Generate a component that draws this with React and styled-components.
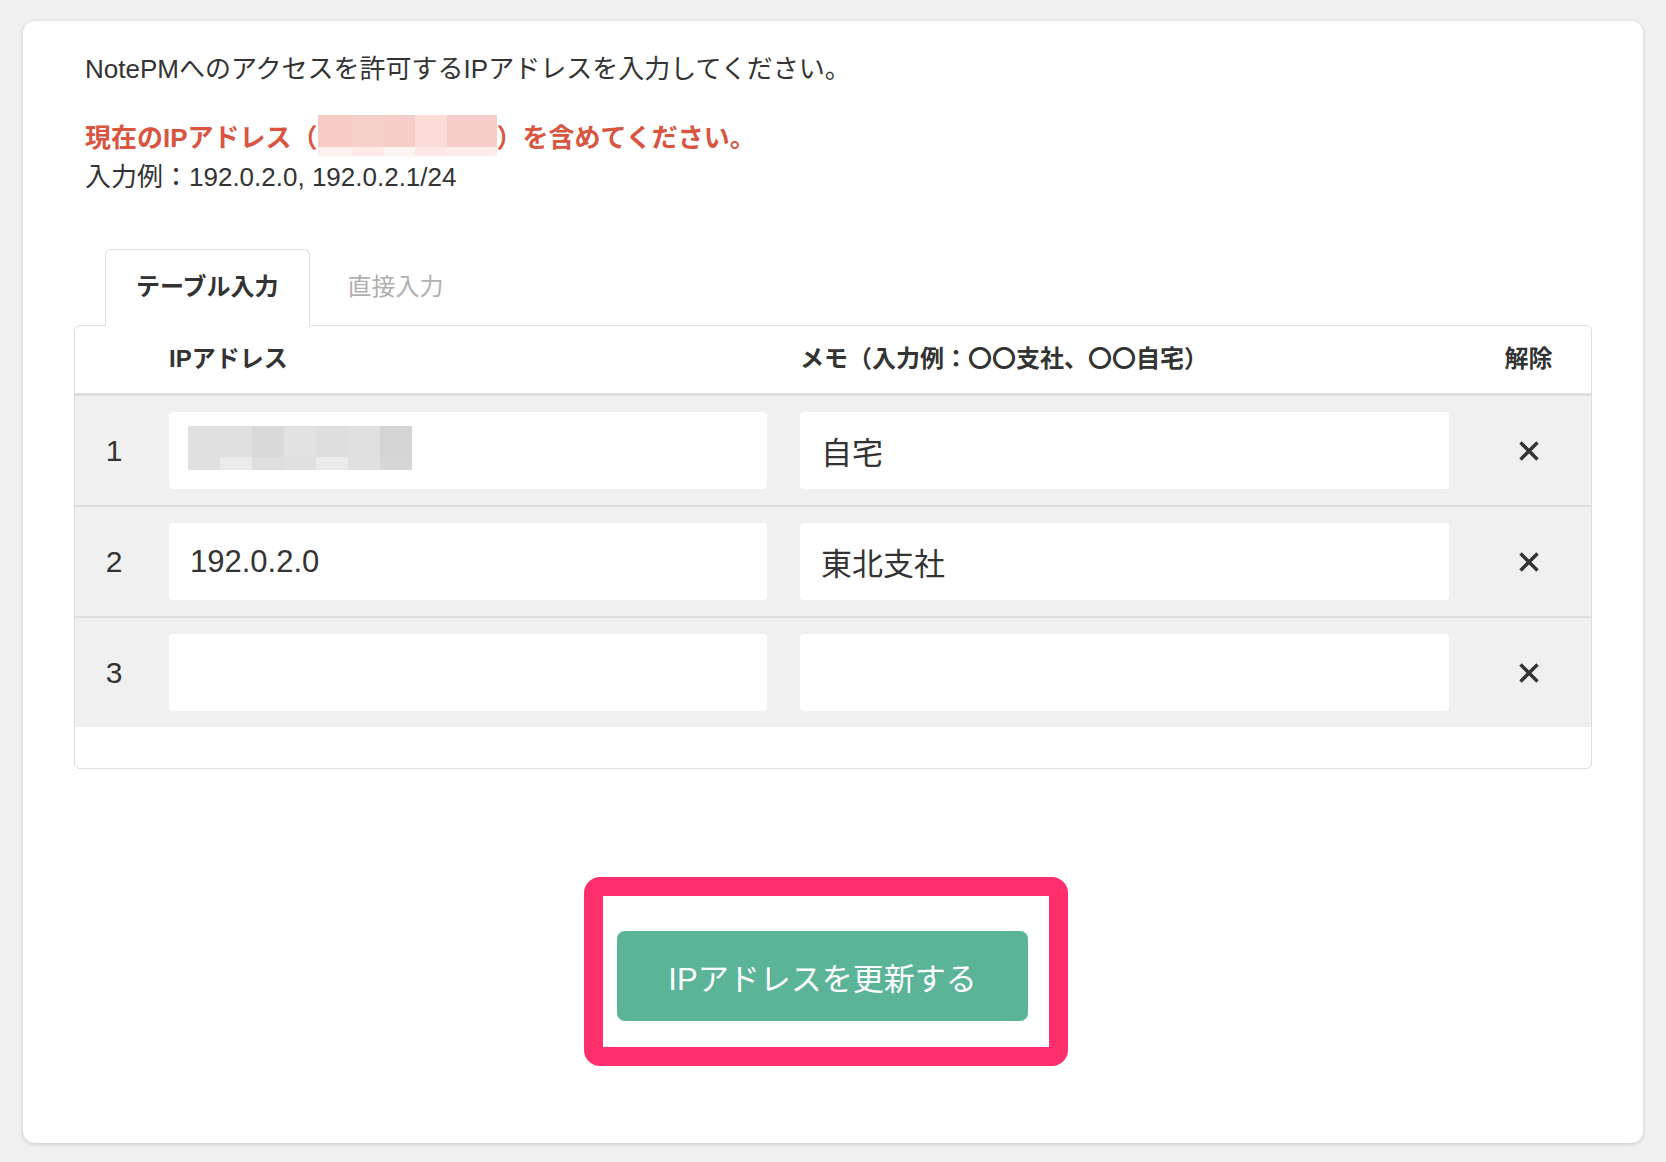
import React from 'react'
import styled, { createGlobalStyle } from 'styled-components'

const GlobalStyle = createGlobalStyle`
  html, body {
    margin: 0;
    background: #f0f0f0;
  }
  body {
    font-family: "Liberation Sans", "Noto Sans CJK JP", sans-serif;
    color: #333;
  }
  * { box-sizing: border-box; }
`

const Page = styled.div`
  padding: 21px 23px 19px;
`

const Card = styled.div`
  background: #fff;
  border-radius: 12px;
  box-shadow: 0 1px 4px rgba(0, 0, 0, 0.16);
  padding: 30px 51px 77px;
`

const Lead = styled.p`
  margin: 0 0 0 11px;
  font-size: 26px;
  line-height: 36px;
`

const Warning = styled(Lead)`
  margin-top: 33px;
  color: #d9553f;
  font-weight: bold;
`

const Example = styled(Lead)`
  margin-top: 3px;
`

/* pixelated blur used to hide addresses */
const Mosaic = styled.span`
  display: inline-flex;
  vertical-align: top;
  height: ${p => p.$h}px;
  margin: ${p => p.$margin || 0};
`

const MosaicCol = styled.span`
  display: flex;
  flex-direction: column;
  width: ${p => p.$w}px;
`

const MosaicCell = styled.span`
  display: block;
  background: ${p => p.$c};
  flex: ${p => p.$grow};
`

const TabBar = styled.div`
  display: flex;
  margin-top: 54px;
  padding-left: 31px;
`

const Tab = styled.div`
  height: 77px;
  display: flex;
  align-items: center;
  padding: 0 ${p => (p.$active ? 30 : 37)}px 8px;
  font-size: 24px;
  font-weight: ${p => (p.$active ? 'bold' : 'normal')};
  color: ${p => (p.$active ? '#333' : '#b0b0b0')};
  background: ${p => (p.$active ? '#fff' : 'transparent')};
  border: 1px solid ${p => (p.$active ? '#ddd' : 'transparent')};
  border-bottom: none;
  border-radius: 6px 6px 0 0;
  margin-bottom: -1px;
  position: relative;
  z-index: 1;
`

const Table = styled.div`
  border: 1px solid #ddd;
  border-radius: 6px;
  background: #fff;
  padding-bottom: 41px;
`

const Row = styled.div`
  display: grid;
  grid-template-columns: 94px 598px 682px 1fr;
  align-items: center;
`

const HeadRow = styled(Row)`
  height: 70px;
  padding-bottom: 6px;
  border-bottom: 3px solid #ddd;
  font-size: 24px;
  font-weight: bold;
`

const BodyRow = styled(Row)`
  background: #f0f0f0;
  padding: 16px 0;
  & + & {
    border-top: 2px solid #ddd;
  }
`

const HeadCell = styled.div`
  padding-left: ${p => p.$indent || 0}px;
  text-align: ${p => p.$align || 'left'};
`

const Num = styled.div`
  font-size: 30px;
  text-align: center;
  padding-right: 16px;
`

const FieldBox = styled.div`
  margin-left: ${p => p.$indent || 0}px;
  height: 77px;
  background: #fff;
  border-radius: 4px;
  display: flex;
  align-items: center;
  padding: 0 21px;
`

const FieldInput = styled.input`
  width: 100%;
  border: none;
  outline: none;
  background: transparent;
  padding: 0;
  font-family: inherit;
  font-size: 31px;
  color: #333;
`

const RemoveCell = styled.div`
  display: flex;
  justify-content: center;
  padding-left: 17px;
`

const RemoveButton = styled.button`
  border: none;
  background: none;
  padding: 0;
  display: flex;
  cursor: pointer;
`

const Actions = styled.div`
  display: flex;
  justify-content: center;
  margin-top: 108px;
  padding-right: 14px;
`

const Highlight = styled.div`
  border: 19px solid #ff2f6e;
  border-radius: 16px;
  padding: 35px 21px 26px 14px;
`

const SubmitButton = styled.button`
  width: 411px;
  height: 90px;
  border: none;
  border-radius: 8px;
  background: #5bb498;
  color: #fff;
  font-family: inherit;
  font-size: 31px;
  cursor: pointer;
`

const warnBlur = [
  { w: 34, top: '#f6cbc5', bottom: '#fdf0ee' },
  { w: 32, top: '#f7d0cb', bottom: '#fde9e6' },
  { w: 31, top: '#f6cdc7', bottom: '#fdf3f1' },
  { w: 32, top: '#f9dbd7', bottom: '#fde8e5' },
  { w: 50, top: '#f6cdc8', bottom: '#fdecea' },
]

const ipBlur = [
  { w: 32, top: '#e0e0e0', bottom: '#e0e0e0' },
  { w: 32, top: '#e0e0e0', bottom: '#ebebeb' },
  { w: 32, top: '#d9d9d9', bottom: '#dedede' },
  { w: 32, top: '#e2e2e2', bottom: '#e0e0e0' },
  { w: 32, top: '#dedede', bottom: '#ebebeb' },
  { w: 32, top: '#e0e0e0', bottom: '#e0e0e0' },
  { w: 32, top: '#d4d4d4', bottom: '#d6d6d6' },
]

const Blur = ({ cols, h, ratio, margin }) => (
  <Mosaic $h={h} $margin={margin}>
    {cols.map((c, i) => (
      <MosaicCol key={i} $w={c.w}>
        <MosaicCell $c={c.top} $grow={ratio[0]} />
        <MosaicCell $c={c.bottom} $grow={ratio[1]} />
      </MosaicCol>
    ))}
  </Mosaic>
)

const CloseIcon = () => (
  <svg width="22" height="22" viewBox="0 0 22 22">
    <path d="M2.5 2.5 L19.5 19.5 M19.5 2.5 L2.5 19.5" stroke="#333" strokeWidth="3.4" fill="none" />
  </svg>
)

const rows = [
  { id: 1, ip: null, memo: '自宅' },
  { id: 2, ip: '192.0.2.0', memo: '東北支社' },
  { id: 3, ip: '', memo: '' },
]

export default function App() {
  return (
    <>
      <GlobalStyle />
      <Page>
        <Card>
          <Lead>NotePMへのアクセスを許可するIPアドレスを入力してください。</Lead>
          <Warning>
            現在のIPアドレス（
            <Blur cols={warnBlur} h={41} ratio={[32, 9]} margin="-5px 0 0 0" />
            ）を含めてください。
          </Warning>
          <Example>入力例：192.0.2.0, 192.0.2.1/24</Example>

          <TabBar>
            <Tab $active>テーブル入力</Tab>
            <Tab>直接入力</Tab>
          </TabBar>
          <Table>
            <HeadRow>
              <div />
              <HeadCell>IPアドレス</HeadCell>
              <HeadCell $indent={33}>メモ（入力例：〇〇支社、〇〇自宅）</HeadCell>
              <HeadCell $indent={17} $align="center">解除</HeadCell>
            </HeadRow>
            {rows.map(r => (
              <BodyRow key={r.id}>
                <Num>{r.id}</Num>
                <FieldBox>
                  {r.ip === null ? (
                    <Blur cols={ipBlur} h={44} ratio={[31, 13]} margin="-6px 0 0 -2px" />
                  ) : (
                    <FieldInput defaultValue={r.ip} />
                  )}
                </FieldBox>
                <FieldBox $indent={33}>
                  <FieldInput defaultValue={r.memo} />
                </FieldBox>
                <RemoveCell>
                  <RemoveButton aria-label="解除">
                    <CloseIcon />
                  </RemoveButton>
                </RemoveCell>
              </BodyRow>
            ))}
          </Table>

          <Actions>
            <Highlight>
              <SubmitButton>IPアドレスを更新する</SubmitButton>
            </Highlight>
          </Actions>
        </Card>
      </Page>
    </>
  )
}
